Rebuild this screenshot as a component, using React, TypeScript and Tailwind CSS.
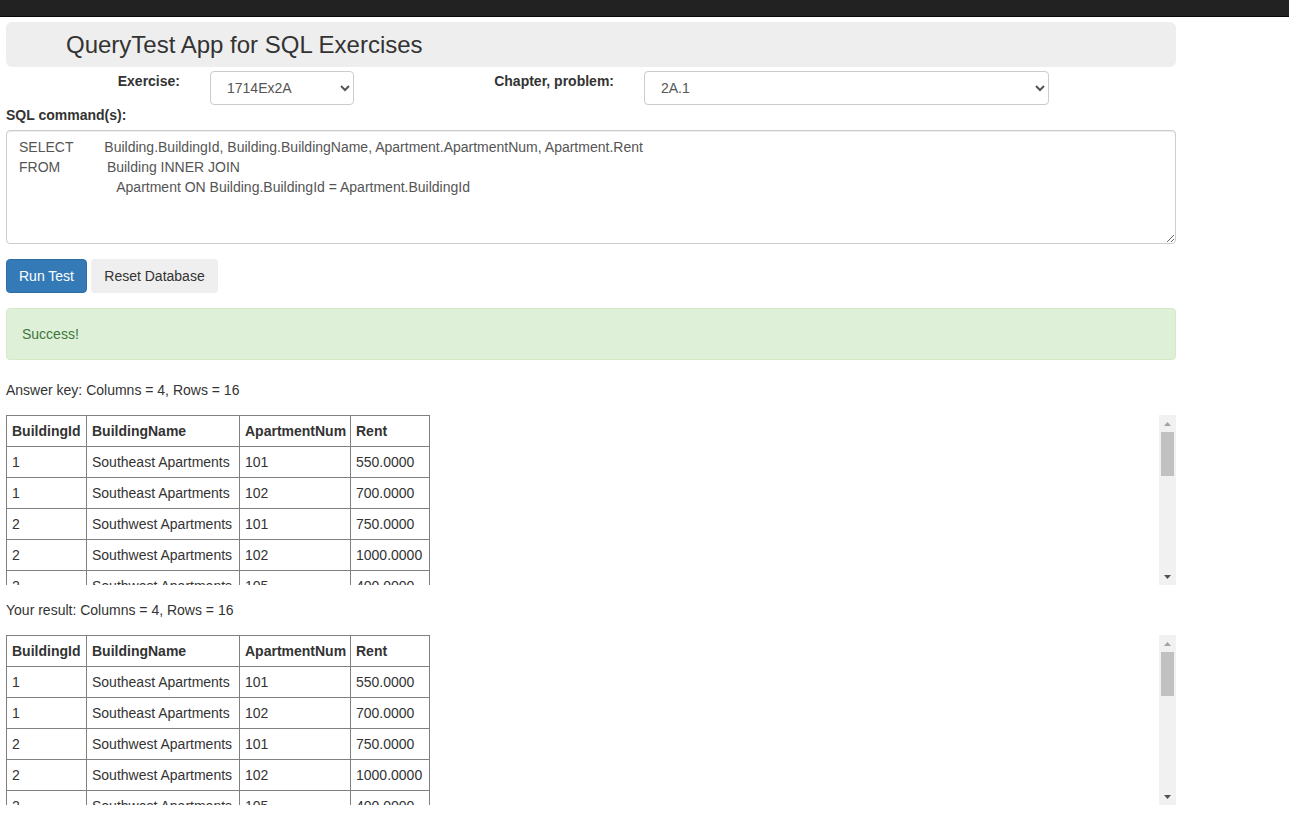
import React from "react";

type Row = [number, string, number, string];

const rows: Row[] = [
  [1, "Southeast Apartments", 101, "550.0000"],
  [1, "Southeast Apartments", 102, "700.0000"],
  [2, "Southwest Apartments", 101, "750.0000"],
  [2, "Southwest Apartments", 102, "1000.0000"],
  [2, "Southwest Apartments", 105, "400.0000"],
  [2, "Southwest Apartments", 201, "800.0000"],
  [3, "Northeast Apartments", 101, "650.0000"],
  [3, "Northeast Apartments", 102, "725.0000"],
  [3, "Northeast Apartments", 103, "690.0000"],
  [3, "Northeast Apartments", 201, "900.0000"],
  [4, "Northwest Apartments", 101, "500.0000"],
  [4, "Northwest Apartments", 102, "575.0000"],
  [4, "Northwest Apartments", 103, "610.0000"],
  [4, "Northwest Apartments", 104, "620.0000"],
  [4, "Northwest Apartments", 201, "880.0000"],
  [4, "Northwest Apartments", 202, "950.0000"],
];

const sql =
  "SELECT        Building.BuildingId, Building.BuildingName, Apartment.ApartmentNum, Apartment.Rent\n" +
  "FROM            Building INNER JOIN\n" +
  "                         Apartment ON Building.BuildingId = Apartment.BuildingId";

function Scrollbar() {
  return (
    <div className="flex h-full w-[17px] shrink-0 flex-col bg-[#f1f1f1]">
      <div className="flex h-[17px] items-center justify-center">
        <svg width="7" height="4" viewBox="0 0 7 4">
          <path d="M0 4 L3.5 0 L7 4 Z" fill="#a3a3a3" />
        </svg>
      </div>
      <div className="mx-[2px] h-[44px] bg-[#c1c1c1]" />
      <div className="flex-1" />
      <div className="flex h-[17px] items-center justify-center">
        <svg width="7" height="4" viewBox="0 0 7 4">
          <path d="M0 0 L7 0 L3.5 4 Z" fill="#505050" />
        </svg>
      </div>
    </div>
  );
}

function ResultTable() {
  return (
    <div className="flex h-[170px] w-[1170px]">
      <div className="flex-1 overflow-hidden">
        <table className="w-[423px] table-fixed border-collapse border border-[#808080] text-[14px] text-[#333]">
          <colgroup>
            <col className="w-[80px]" />
            <col className="w-[153px]" />
            <col className="w-[111px]" />
            <col className="w-[79px]" />
          </colgroup>
          <thead>
            <tr>
              {["BuildingId", "BuildingName", "ApartmentNum", "Rent"].map((h) => (
                <th key={h} className="overflow-hidden whitespace-nowrap border border-[#808080] p-[5px] text-left font-bold leading-5">
                  {h}
                </th>
              ))}
            </tr>
          </thead>
          <tbody>
            {rows.map((r, i) => (
              <tr key={i}>
                {r.map((c, j) => (
                  <td key={j} className="whitespace-nowrap border border-[#808080] p-[5px] leading-5">
                    {c}
                  </td>
                ))}
              </tr>
            ))}
          </tbody>
        </table>
      </div>
      <Scrollbar />
    </div>
  );
}

export default function App() {
  return (
    <div className="min-h-[823px] bg-white font-['Liberation_Sans',Arial,sans-serif] text-[14px] leading-5 text-[#333]">
      {/* Navbar, mostly scrolled off */}
      <div className="h-[17px] overflow-hidden border-b border-[#080808] bg-[#222]">
        <div className="mt-[-20px] pl-[15px] text-[18px] leading-5 text-[#9d9d9d]">QueryTest</div>
      </div>

      <div className="box-content w-[1170px] pl-[6px] pt-[5px]">
        {/* Header */}
        <div className="flex h-[45px] items-center rounded-[6px] bg-[#eee] pl-[60px]">
          <h1 className="text-[24px] font-normal text-[#333]">QueryTest App for SQL Exercises</h1>
        </div>

        {/* Selectors */}
        <div className="mt-[4px] flex items-start">
          <label className="w-[174px] text-right font-bold">Exercise:</label>
          <select className="ml-[30px] h-[34px] w-[144px] rounded-[4px] border border-[#ccc] bg-white px-3 text-[14px] text-[#555]">
            <option>1714Ex2A</option>
          </select>
          <label className="w-[260px] text-right font-bold">Chapter, problem:</label>
          <select className="ml-[30px] h-[34px] w-[405px] rounded-[4px] border border-[#ccc] bg-white px-3 text-[14px] text-[#555]">
            <option>2A.1</option>
          </select>
        </div>

        <div className="font-bold">SQL command(s):</div>

        <textarea
          className="mt-[5px] block h-[114px] w-full rounded-[4px] border border-[#ccc] px-3 py-[6px] text-[14px] leading-5 text-[#555] shadow-[inset_0_1px_1px_rgba(0,0,0,0.075)]"
          defaultValue={sql}
        />

        {/* Buttons */}
        <div className="mt-[15px] flex gap-[4px]">
          <button className="h-[34px] w-[81px] rounded-[4px] border border-[#2e6da4] bg-[#337ab7] text-white">
            Run Test
          </button>
          <button className="h-[34px] w-[127px] rounded-[4px] bg-[#efefef] text-[#333]">
            Reset Database
          </button>
        </div>

        {/* Alert */}
        <div className="mt-[15px] rounded-[4px] border border-[#d6e9c6] bg-[#dff0d8] p-[15px] text-[#3c763d]">
          Success!
        </div>

        <p className="mt-[20px]">Answer key: Columns = 4, Rows = 16</p>
        <div className="mt-[15px]">
          <ResultTable />
        </div>

        <p className="mt-[15px]">Your result: Columns = 4, Rows = 16</p>
        <div className="mt-[15px]">
          <ResultTable />
        </div>
      </div>
    </div>
  );
}
